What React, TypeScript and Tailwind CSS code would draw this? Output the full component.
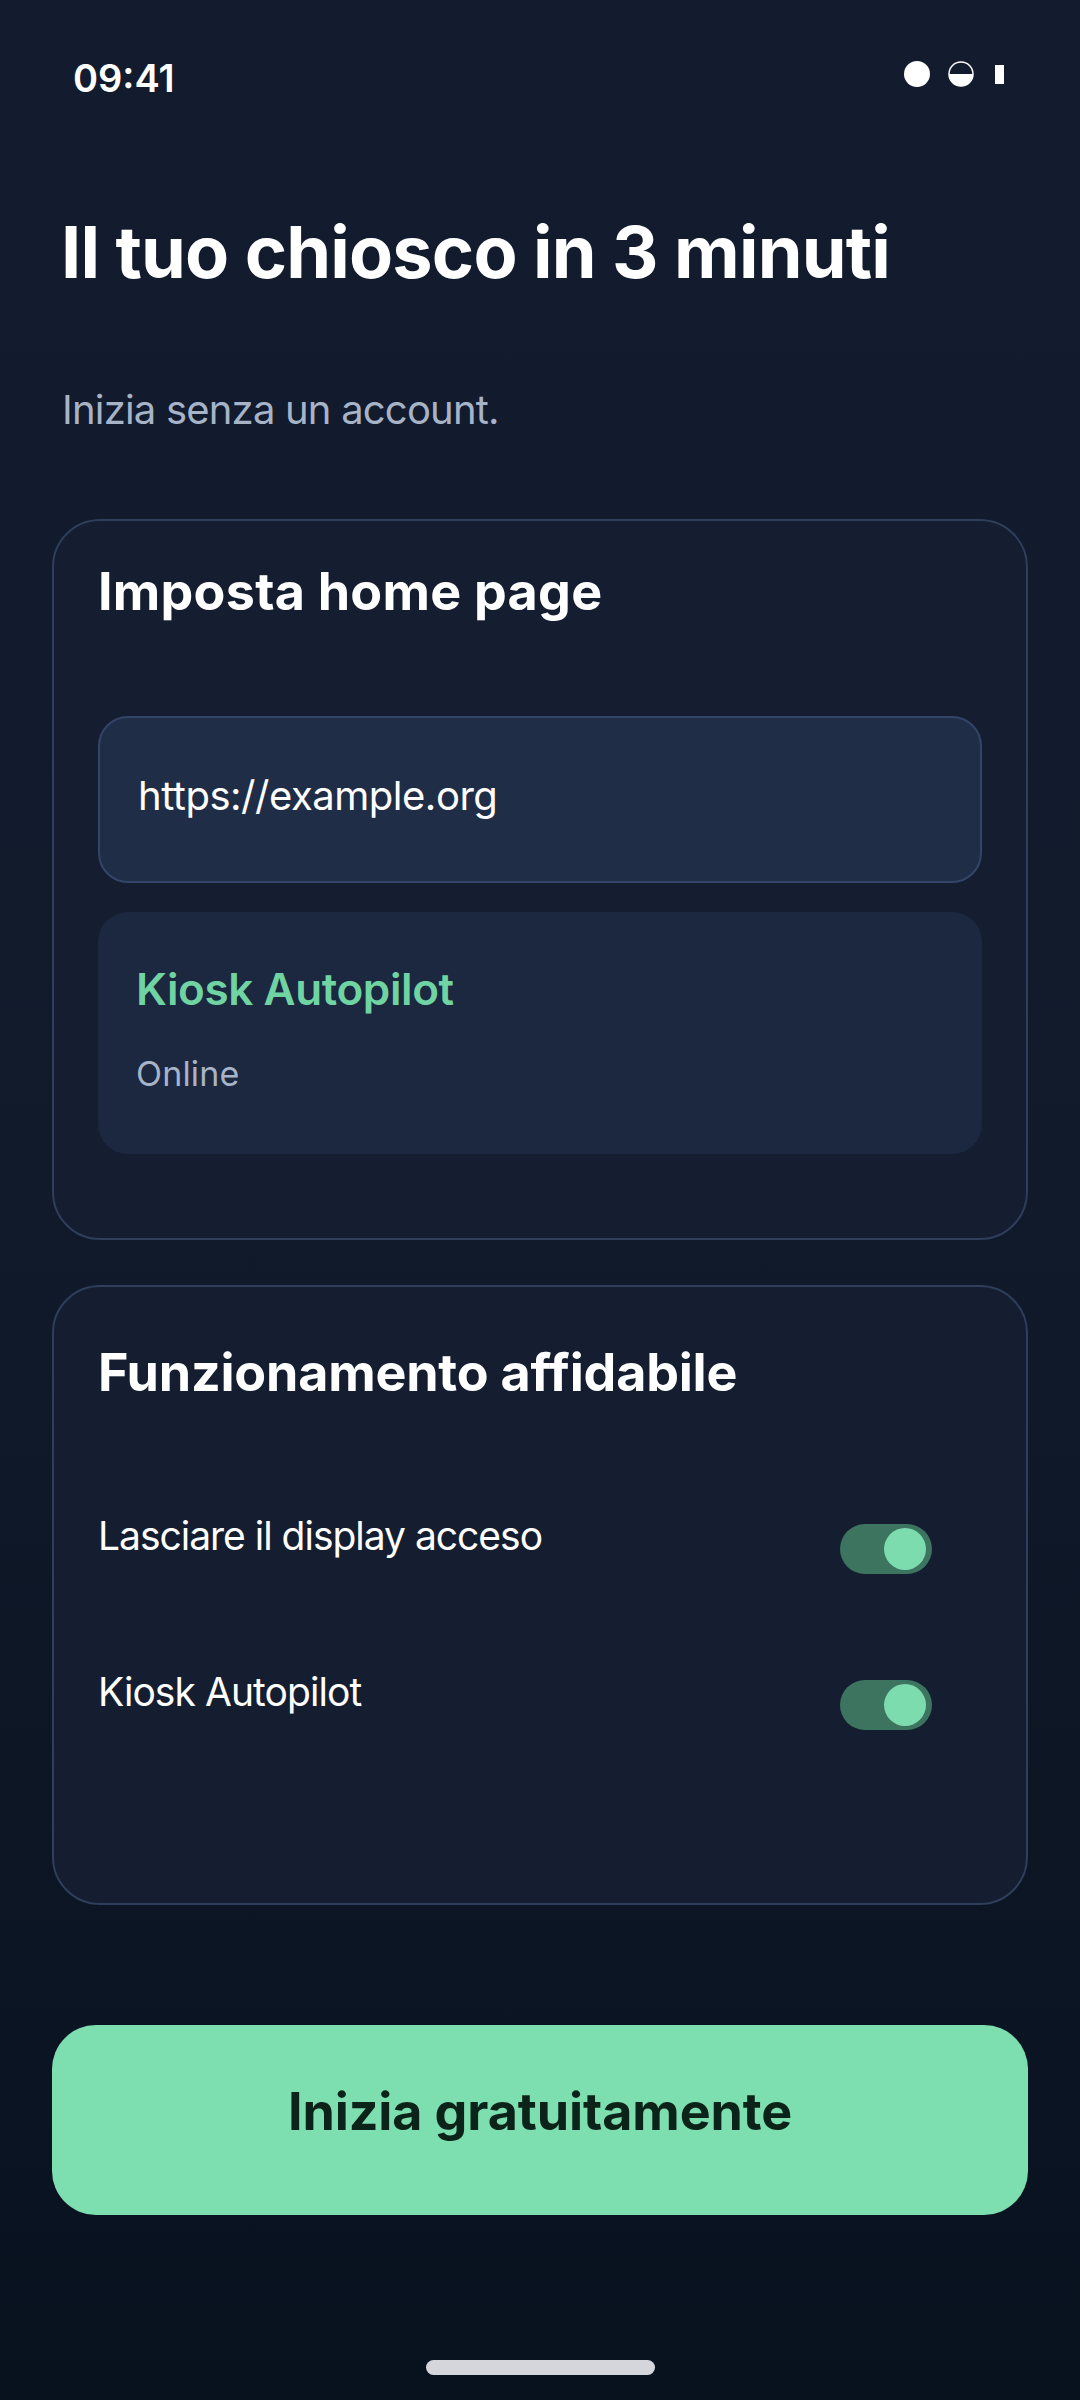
import React from "react";

function Toggle() {
  return (
    <div className="mt-[12px] mr-[50px] flex h-[50px] w-[92px] shrink-0 items-center justify-end rounded-full bg-[#3c7460] pr-[6px]">
      <div className="h-[42px] w-[42px] rounded-full bg-[#7ddcae]" />
    </div>
  );
}

export default function App() {
  return (
    <div className="flex min-h-[2400px] w-[1080px] flex-col bg-gradient-to-b from-[#121c2e] via-[#111a2b] to-[#08121f] font-[Inter,sans-serif] text-white">
      {/* status bar */}
      <div className="flex h-[38px] items-center justify-between pl-[73px] pr-[76px] mt-[59px]">
        <span className="text-[38px] font-semibold leading-none">09:41</span>
        <div className="mb-[8px] flex items-center gap-[18px]">
          <div className="h-[26px] w-[26px] rounded-full bg-white" />
          <svg width="26" height="26" viewBox="0 0 26 26">
            <circle cx="13" cy="13" r="12" fill="none" stroke="white" strokeWidth="1.5" />
            <path d="M1 13 A12 12 0 0 0 25 13 Z" fill="white" />
          </svg>
          <div className="ml-[3px] h-[19px] w-[9px] bg-white" />
        </div>
      </div>

      {/* heading */}
      <h1 className="mt-[115px] pl-[61px] text-[72px] font-bold leading-[1.1] tracking-[-0.011em]">
        Il tuo chiosco in 3 minuti
      </h1>
      <p className="mt-[95px] pl-[62px] text-[40px] leading-[48px] tracking-[-0.02em] text-[#a7b3c7]">
        Inizia senza un account.
      </p>

      {/* card 1 */}
      <div className="mx-[52px] mt-[85px] rounded-[48px] border-2 border-[#2f3e5a] bg-[#141e30] px-[44px] pt-[40px] pb-[84px]">
        <h2 className="text-[52px] font-bold leading-[62px] tracking-[0.005em]">Imposta home page</h2>
        <div className="mt-[93px] flex h-[167px] items-center rounded-[30px] border-2 border-[#34456a] bg-[#1f2d47] pl-[38px] pb-[8px]">
          <span className="text-[40px] leading-[48px] tracking-[-0.012em] text-white">https://example.org</span>
        </div>
        <div className="mt-[29px] flex h-[242px] flex-col rounded-[30px] bg-[#1b2840] pl-[38px] pt-[51px]">
          <span className="text-[44px] font-semibold leading-[52px] tracking-[-0.009em] text-[#6fd3a2]">Kiosk Autopilot</span>
          <span className="mt-[39px] text-[34px] leading-[40px] tracking-[0.005em] text-[#a7b3c7]">Online</span>
        </div>
      </div>

      {/* card 2 */}
      <div className="mx-[52px] mt-[45px] rounded-[48px] border-2 border-[#2f3e5a] bg-[#141e30] px-[44px] pt-[55px] pb-[173px]">
        <h2 className="text-[52px] font-bold leading-[62px] tracking-[-0.004em]">Funzionamento affidabile</h2>
        <div className="mt-[108px] flex h-[62px] items-start justify-between">
          <span className="text-[39px] leading-[47px] tracking-[-0.026em]">Lasciare il display acceso</span>
          <Toggle />
        </div>
        <div className="mt-[94px] flex h-[62px] items-start justify-between">
          <span className="text-[39px] leading-[47px] tracking-[-0.024em]">Kiosk Autopilot</span>
          <Toggle />
        </div>
      </div>

      {/* button */}
      <button className="mx-[52px] mt-[120px] flex h-[190px] items-center justify-center rounded-[44px] bg-[#7ddeb0] pb-[16px]">
        <span className="text-[52px] font-bold leading-[62px] tracking-[-0.002em] text-[#0b2318]">Inizia gratuitamente</span>
      </button>

      {/* home indicator */}
      <div className="mt-[145px] flex justify-center">
        <div className="h-[15px] w-[229px] rounded-full bg-[#d4d6db]" />
      </div>
    </div>
  );
}
